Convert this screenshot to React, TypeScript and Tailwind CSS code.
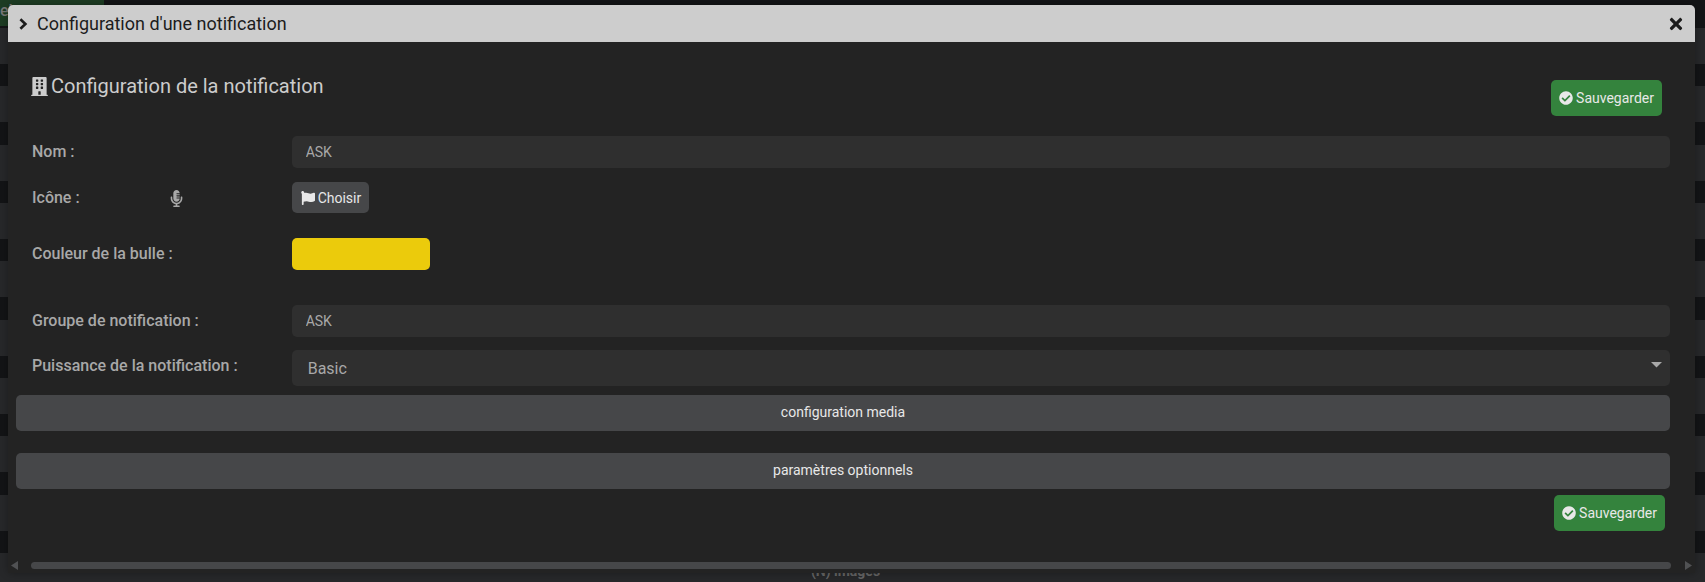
import React from 'react';
import { FaBuilding, FaCheckCircle, FaFlag, FaMicrophoneAlt, FaTimes } from 'react-icons/fa';

const backgroundRows = ['', '', '', '', '', '', '', '', '', '(N) images'];

const inputClass = 'block h-8 w-full rounded-[5px] bg-[#2f2f2f] px-[14px] text-sm text-[#a8a8a8] outline-none';
const barClass = 'block h-9 w-full rounded-[5px] bg-[#464749] pb-0.5 text-sm text-[#e8e8e8]';

function FormRow({ label, htmlFor, icon, children }: { label: string; htmlFor: string; icon?: React.ReactNode; children: React.ReactNode }) {
  return (
    <div className="grid grid-cols-6 items-start">
      <div className="flex h-8 items-center pl-4">
        <label htmlFor={htmlFor} className="whitespace-nowrap text-base font-medium text-[#a8a8a8]">{label}</label>
        {icon}
      </div>
      <div className="col-span-5">{children}</div>
    </div>
  );
}

function SaveButton() {
  return (
    <button type="button" className="flex h-9 items-center gap-[3px] rounded-[5px] bg-[#34833d] px-2 text-sm text-[#e8e8e8]">
      <FaCheckCircle size={14} /> Sauvegarder
    </button>
  );
}

export default function App() {
  return (
    <div className="relative h-screen overflow-hidden bg-[#131416] font-['Roboto',sans-serif]">
      <div className="flex h-7 items-start">
        <span className="h-[26px] w-[104px] bg-[#1d3c23] text-base font-medium leading-[22px] text-[#777777]">el</span>
      </div>
      <div className="flex h-[561px] flex-col justify-between">
        {backgroundRows.map((text, i) => (
          <div key={i} className="flex h-9 items-center justify-center bg-[#27282a] pr-[14px] text-sm font-bold text-[#666666]">{text}</div>
        ))}
      </div>

      <section role="dialog" aria-labelledby="dialog-title" className="absolute left-2 right-[10px] top-[5px] rounded-t-[5px] bg-[#232323] shadow-[0_0_8px_rgba(0,0,0,0.3)]">
        <header className="flex h-[37px] items-center rounded-t-[5px] bg-[#cdcdcd] pl-[11px] pr-[10px] text-[#1c1c1c]">
          <svg width="9" height="12" viewBox="0 0 9 12" fill="none" stroke="currentColor" strokeWidth="2.6">
            <path d="M1.4 1.2 6.4 6l-5 4.8" />
          </svg>
          <h1 id="dialog-title" className="ml-[9px] flex-1 text-lg">Configuration d'une notification</h1>
          <button type="button" aria-label="Fermer"><FaTimes size={18} /></button>
        </header>

        <form className="pl-2 pr-[25px] pt-[38px]" onSubmit={(e) => e.preventDefault()}>
          <div className="mb-5 flex items-start justify-between pl-[14px] pr-2">
            <h2 className="flex h-3 items-center gap-0.5 text-xl text-[#cccccc]">
              <FaBuilding size={19} /> Configuration de la notification
            </h2>
            <SaveButton />
          </div>

          <FormRow label="Nom :" htmlFor="nom">
            <input id="nom" type="text" defaultValue="ASK" className={inputClass} />
          </FormRow>
          <div className="mt-[14px]">
            <FormRow label="Icône :" htmlFor="icone" icon={<FaMicrophoneAlt size={17} className="ml-[88px] text-[#a8a8a8]" />}>
              <button id="icone" type="button" className="flex h-[31px] items-center gap-[3px] rounded-[5px] bg-[#464749] pl-[9px] pr-2 text-sm text-[#e8e8e8]">
                <FaFlag size={14} /> Choisir
              </button>
            </FormRow>
          </div>
          <div className="mt-6">
            <FormRow label="Couleur de la bulle :" htmlFor="couleur">
              <input
                id="couleur"
                type="color"
                defaultValue="#ebcb0c"
                className="block h-8 w-[138px] appearance-none overflow-hidden rounded-[5px] bg-[#ebcb0c] p-0 [&::-webkit-color-swatch-wrapper]:p-0 [&::-webkit-color-swatch]:border-0"
              />
            </FormRow>
          </div>
          <div className="mt-[35px]">
            <FormRow label="Groupe de notification :" htmlFor="groupe">
              <input id="groupe" type="text" defaultValue="ASK" className={inputClass} />
            </FormRow>
          </div>
          <div className="mt-[13px]">
            <FormRow label="Puissance de la notification :" htmlFor="puissance">
              <div className="relative">
                <select id="puissance" className="block h-9 w-full appearance-none rounded-[5px] bg-[#2f2f2f] px-4 pt-0.5 text-base text-[#a8a8a8] outline-none">
                  <option>Basic</option>
                </select>
                <svg className="pointer-events-none absolute right-2 top-3" width="11" height="6" viewBox="0 0 11 6" fill="#a8a8a8">
                  <path d="M0 0h11L5.5 5.5z" />
                </svg>
              </div>
            </FormRow>
          </div>

          <button type="button" className={`${barClass} mt-[9px]`}>configuration media</button>
          <button type="button" className={`${barClass} mt-[22px]`}>paramètres optionnels</button>
          <div className="mt-[6px] flex justify-end pr-[5px]">
            <SaveButton />
          </div>
        </form>

        <div className="mt-[30px] flex items-center justify-between px-[3px] pb-[3px]">
          <svg width="7" height="9" viewBox="0 0 7 9" fill="#505153"><path d="M7 0v9L0 4.5z" /></svg>
          <div className="ml-[13px] mr-[14px] h-[7px] flex-1 rounded-full bg-[#464749]" />
          <svg width="7" height="9" viewBox="0 0 7 9" fill="#505153"><path d="M0 0v9l7-4.5z" /></svg>
        </div>
      </section>
    </div>
  );
}
